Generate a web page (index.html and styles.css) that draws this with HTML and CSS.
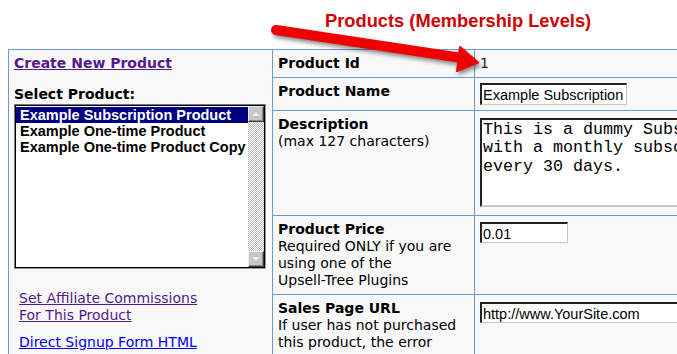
FILE: index.html
```html
<!DOCTYPE html>
<html>
<head>
<meta charset="utf-8">
<title>Products (Membership Levels)</title>
<link rel="stylesheet" href="styles.css">
</head>
<body>
<h1 class="title">Products (Membership Levels)</h1>

<table class="grid">
  <colgroup>
    <col class="c-side">
    <col class="c-label">
    <col class="c-value">
  </colgroup>
  <tr class="r-id">
    <td class="side" rowspan="5">
      <a class="create" href="#">Create New Product</a>
      <div class="select-label">Select Product:</div>
      <div class="listbox">
        <div class="list-items">
          <div class="item selected">Example Subscription Product</div>
          <div class="item">Example One-time Product</div>
          <div class="item">Example One-time Product Copy</div>
        </div>
        <div class="scrollbar">
          <div class="sb-btn"><span class="tri up"></span></div>
          <div class="sb-track"></div>
          <div class="sb-btn"><span class="tri down"></span></div>
        </div>
      </div>
      <a class="side-link visited" href="#">Set Affiliate Commissions<br>For This Product</a>
      <a class="side-link fresh" href="#">Direct Signup Form HTML</a>
    </td>
    <td class="label"><b>Product Id</b></td>
    <td class="value id">1</td>
  </tr>
  <tr class="r-name">
    <td class="label"><b>Product Name</b></td>
    <td class="value"><input class="field name" type="text" value="Example Subscription Product"></td>
  </tr>
  <tr class="r-desc">
    <td class="label"><b>Description</b><br>(max 127 characters)</td>
    <td class="value"><textarea class="desc">This is a dummy Subscription product
with a monthly subscription charged
every 30 days.</textarea></td>
  </tr>
  <tr class="r-price">
    <td class="label"><b>Product Price</b><br>Required ONLY if you are<br>using one of the<br>Upsell-Tree Plugins</td>
    <td class="value"><input class="field price" type="text" value="0.01"></td>
  </tr>
  <tr class="r-url">
    <td class="label"><b>Sales Page URL</b><br>If user has not purchased<br>this product, the error</td>
    <td class="value"><input class="field url" type="text" value="http://www.YourSite.com"></td>
  </tr>
</table>

<svg class="arrow" width="677" height="100" viewBox="0 0 677 100" aria-hidden="true">
  <line x1="276" y1="30" x2="462" y2="58" stroke="#f00000" stroke-width="10" stroke-linecap="round"/>
  <polygon points="460,47 478,62.5 457,71" fill="#f00000" stroke="#f00000" stroke-width="2" stroke-linejoin="round"/>
</svg>
</body>
</html>
```
FILE: styles.css
```css
html, body {
  overflow: hidden;
}
body {
  margin: 0;
  padding: 0 8px;
  background: #fff;
  font-family: "DejaVu Sans", Verdana, sans-serif;
  font-size: 14px;
  line-height: 17px;
  color: #000;
  position: relative;
  width: 900px;
}
.title {
  margin: 0;
  height: 49px;
  box-sizing: border-box;
  padding: 10px 0 0 317px;
  font-family: "Liberation Sans", Arial, sans-serif;
  font-size: 18.3px;
  line-height: 21px;
  font-weight: bold;
  color: #d00000;
}
.grid {
  border-collapse: collapse;
  table-layout: fixed;
  width: 780px;
  background: #f8f8f8;
  border: 1px solid #6b9bd0;
}
.c-side { width: 264px; }
.c-label { width: 202px; }
.c-value { width: 314px; }
.grid td {
  border: 1px solid #6b9bd0;
  padding: 5px;
  vertical-align: top;
}
.r-desc { height: 105px; }
.id { color: #222; }

.side a {
  display: block;
}
.create {
  font-weight: bold;
  color: #551a8b;
}
.select-label {
  margin-top: 14px;
  font-weight: bold;
}
.listbox {
  margin-top: 1px;
  width: 252px;
  height: 165px;
  box-sizing: border-box;
  border: 1px solid #9a9a9a;
  border-top-color: #777;
  border-left-color: #777;
  box-shadow: inset 1px 1px 0 #000, inset -1px -1px 0 #000;
  background: #fff;
  display: flex;
  padding: 1px;
}
.list-items {
  flex: 1;
  padding-top: 1px;
  font-family: "Liberation Sans", Arial, sans-serif;
  font-weight: bold;
  font-size: 14.5px;
  line-height: 16px;
}
.item {
  padding-left: 4px;
  white-space: nowrap;
}
.item.selected {
  background: #000080;
  color: #fff;
}
.scrollbar {
  width: 16px;
  display: flex;
  flex-direction: column;
}
.sb-btn {
  height: 16px;
  box-sizing: border-box;
  background: #c6c6c6;
  border: 1px solid;
  border-color: #f0f0f0 #404040 #404040 #f0f0f0;
  box-shadow: inset -1px -1px 0 #888;
  display: flex;
  align-items: center;
  justify-content: center;
}
.tri {
  width: 0;
  height: 0;
  border-left: 4px solid transparent;
  border-right: 4px solid transparent;
}
.tri.up { border-bottom: 4px solid #eee; margin-top: -1px; }
.tri.down { border-top: 4px solid #eee; }
.sb-track {
  flex: 1;
  background: repeating-conic-gradient(#c0c0c0 0 25%, #fff 0 50%) 0 0 / 2px 2px;
}
.side-link {
  margin-left: 5px;
  font-weight: normal;
}
.side-link.visited {
  margin-top: 21px;
  color: #551a8b;
}
.side-link.fresh {
  margin-top: 10px;
  color: #0000ee;
}

.field {
  display: block;
  margin: 0;
  box-sizing: border-box;
  height: 22px;
  padding: 1px 0 0 1px;
  font-family: "Liberation Sans", Arial, sans-serif;
  font-size: 14.5px;
  color: #000;
  background: #fff;
  border-style: solid;
  border-width: 2px 1px 1px 2px;
  border-color: #222 #c8c8c8 #c8c8c8 #222;
  outline: none;
}
.field.name { width: 147px; }
.field.price { width: 88px; height: 21px; margin-top: 1px; }
.field.url { width: 320px; height: 21px; margin-top: 2px; }
.desc {
  display: block;
  margin: 2px 0 0;
  box-sizing: border-box;
  width: 320px;
  height: 89px;
  padding: 1px 1px;
  font-family: "Liberation Mono", "Courier New", monospace;
  font-size: 16.67px;
  line-height: 18.3px;
  color: #000;
  background: #fff;
  border: 2px solid;
  border-color: #222 #c8c8c8 #c8c8c8 #222;
  resize: none;
  overflow: hidden;
  white-space: pre;
}

.arrow {
  position: absolute;
  left: 0;
  top: 0;
  filter: drop-shadow(2px 3px 2px rgba(0, 0, 0, 0.45));
  pointer-events: none;
}
```
